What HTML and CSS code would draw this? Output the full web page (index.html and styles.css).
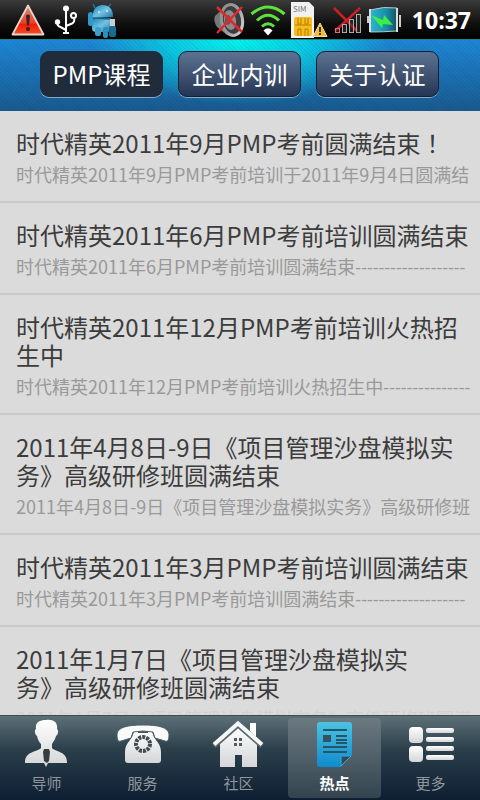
FILE: index.html
```
<!DOCTYPE html>
<html lang="zh-CN">
<head>
    <meta charset="UTF-8">
    <meta name="viewport" content="width=device-width, initial-scale=1.0">
    <title>热点</title>
    <link rel="stylesheet" href="styles.css">
</head>
<body>
    <!-- shared gradients -->
    <svg class="defs" width="0" height="0" aria-hidden="true">
        <defs>
            <linearGradient id="white" x1="0" y1="0" x2="0" y2="1"><stop offset="0" stop-color="#ffffff"/><stop offset="1" stop-color="#d3d5d6"/></linearGradient>
            <linearGradient id="blue" x1="0" y1="0" x2="0" y2="1"><stop offset="0" stop-color="#4cc3e2"/><stop offset="1" stop-color="#0f8bcd"/></linearGradient>
            <linearGradient id="red" x1="0" y1="0" x2="0" y2="1"><stop offset="0" stop-color="#d98a78"/><stop offset="0.6" stop-color="#e8412c"/><stop offset="0.65" stop-color="#f01c00"/><stop offset="1" stop-color="#f4502c"/></linearGradient>
            <linearGradient id="robot" x1="0" y1="0" x2="1" y2="1"><stop offset="0" stop-color="#1583b5"/><stop offset="0.5" stop-color="#74c3e4"/><stop offset="1" stop-color="#176f9d"/></linearGradient>
            <linearGradient id="metal" x1="0" y1="0" x2="1" y2="1"><stop offset="0" stop-color="#8d8d8d"/><stop offset="0.5" stop-color="#9a9a9a"/><stop offset="1" stop-color="#dadada"/></linearGradient>
            <linearGradient id="charge" x1="0" y1="0" x2="1" y2="0"><stop offset="0" stop-color="#2fb6cf"/><stop offset="0.6" stop-color="#198ea9"/><stop offset="1" stop-color="#15505f"/></linearGradient>
        </defs>
    </svg>

    <div class="status-bar">
        <div class="status-group notices">
            <svg width="36" height="36" viewBox="0 0 36 36"><path d="M18 3.500L33.500 32.500H2.500Z" fill="url(#red)" stroke="#e6d5cc" stroke-width="1.800" stroke-linejoin="round"/><path d="M16 13.500q2-2 4 0l-1 10h-2z" fill="#3a2020"/><circle cx="18" cy="27" r="2" fill="#3a2020"/></svg>
            <svg width="24" height="36" viewBox="0 0 24 36"><g fill="none" stroke="#fff" stroke-width="2"><path d="M12 6v25M3.500 20v2q0 2 3 3l5.500 3M20 16q1 4-2 5.500L12 24"/><circle cx="19.500" cy="13.500" r="2.500"/></g><circle cx="12" cy="6.500" r="3" fill="#fff"/><circle cx="3.500" cy="20" r="2.700" fill="#fff"/><path d="M9 30h6v2H9z" fill="#fff"/></svg>
            <svg width="32" height="38" viewBox="0 0 32 38"><path d="M9 7l-2-4M22 6l3-3" stroke="#1b7aa5" stroke-width="1.500"/><path d="M7 17Q6 5 16 4q11 0 11 12z" fill="url(#robot)"/><rect x="6" y="17" width="20" height="14" rx="4" fill="url(#robot)"/><rect x="2" y="11" width="5" height="14" rx="2.500" fill="#2f9aca"/><rect x="9" y="26" width="6" height="9" rx="2" fill="#3d9fca"/><rect x="17" y="26" width="5" height="11" rx="2" fill="#2d8fbd"/><path d="M7 17l18 1" stroke="#14628a" stroke-width="1.500"/><circle cx="13" cy="11" r="1" fill="#d8f3ff"/><circle cx="21" cy="10" r="1" fill="#d8f3ff"/><rect x="24" y="18" width="5" height="8" fill="#c9cdd0"/><rect x="23" y="25" width="7" height="11" rx="2" fill="#176d91"/></svg>
        </div>
        <div class="status-group system">
            <svg width="34" height="36" viewBox="0 0 34 36"><path d="M3 14L15 3v30L5 25Q1 19 3 14z" fill="#777"/><ellipse cx="20" cy="18" rx="10.500" ry="15.500" fill="#3d3d3d" stroke="url(#metal)" stroke-width="3" transform="rotate(-10 20 18)"/><ellipse cx="18" cy="18" rx="6" ry="10" fill="#8b8b8b" transform="rotate(-10 18 18)"/><ellipse cx="16" cy="18" rx="3" ry="5" fill="#5a5a5a"/><path d="M5 5l25 25M30 5L5 31" stroke="#e0292d" stroke-width="2.500"/></svg>
            <svg width="36" height="32" viewBox="0 0 36 32"><g fill="none" stroke="#5fe23a" stroke-width="3"><path d="M1.500 10Q18-4 34.500 10"/><path d="M7 16.500Q18 6 29 16.500"/><path d="M12 22.500Q18 17 24 22.500"/></g><path d="M13.500 26.500Q18 22 22.500 26.500L18 31.500z" fill="#fff"/></svg>
            <svg width="38" height="36" viewBox="0 0 38 36"><path d="M1 0h18l5 5v31H1z" fill="#f1f1f1"/><text x="3" y="10" class="sim">SIM</text><rect x="4" y="15" width="18" height="19" rx="2" fill="#f6bd1d"/><path d="M8 16v6h3v-6M15 16v6h3v-6M5 23h16M8 34v-7h3v7M15 34v-7h3v7" fill="none" stroke="#b77b0d" stroke-width="1"/><path d="M30 21l7 13.500H23z" fill="#f3bd3c" stroke="#f9dc93" stroke-linejoin="round"/><path d="M30 25v5M30 31v2" stroke="#4b3305" stroke-width="2"/></svg>
            <svg width="30" height="32" viewBox="0 0 30 32"><path d="M2 4l23 23M28 4L3 27" stroke="#c71f23" stroke-width="2.500"/><g fill="#333" fill-opacity="0.5" stroke="#aaa" stroke-width="1"><rect x="3.500" y="24.500" width="4" height="4" stroke="#e46a68"/><rect x="10.500" y="20.500" width="4" height="8"/><rect x="17.500" y="15.500" width="4" height="13"/><rect x="24.500" y="10.500" width="4" height="18"/></g></svg>
            <svg width="36" height="32" viewBox="0 0 36 32"><path d="M4 6q14-4 27-2v23q-14 1-27 1z" fill="url(#charge)" stroke="#b6c6ce" stroke-width="1"/><path d="M4 5v23M31 4v24" stroke="#ddd" stroke-width="2"/><path d="M33 11h2v12h-2zM1 12h2v7H1z" fill="#ccc"/><path d="M5 11l12 5 1-5 9 10-10-1-1 4z" fill="#39f047"/></svg>
            <time class="clock">10:37</time>
        </div>
    </div>

    <header class="header">
        <button type="button" class="pill selected">PMP课程</button>
        <button type="button" class="pill">企业内训</button>
        <button type="button" class="pill">关于认证</button>
    </header>

    <main class="news">
        <article class="item">
            <h2>时代精英2011年9月PMP考前圆满结束<span class="mark" lang="zh-TW">！</span></h2>
            <p>时代精英2011年9月PMP考前培训于2011年9月4日圆满结</p>
        </article>
        <article class="item">
            <h2>时代精英2011年6月PMP考前培训圆满结束</h2>
            <p>时代精英2011年6月PMP考前培训圆满结束<span class="dashes">-------------------</span></p>
        </article>
        <article class="item">
            <h2>时代精英2011年12月PMP考前培训火热招生中</h2>
            <p>时代精英2011年12月PMP考前培训火热招生中<span class="dashes">---------------</span></p>
        </article>
        <article class="item">
            <h2>2011年4月8日-9日《项目管理沙盘模拟实务》高级研修班圆满结束</h2>
            <p>2011年4月8日-9日《项目管理沙盘模拟实务》高级研修班</p>
        </article>
        <article class="item">
            <h2>时代精英2011年3月PMP考前培训圆满结束</h2>
            <p>时代精英2011年3月PMP考前培训圆满结束<span class="dashes">-------------------</span></p>
        </article>
        <article class="item">
            <h2>2011年1月7日《项目管理沙盘模拟实<br>务》高级研修班圆满结束</h2>
            <p>2011年1月7日《项目管理沙盘模拟实务》高级研修班圆满</p>
        </article>
    </main>

    <nav class="tabs">
        <a href="#teachers" class="tab">
            <svg width="56" height="50" viewBox="0 0 56 50"><path d="M27 2c8-1 12 3 11 9 2 1 1 6-1 7-1 4-3 6-4 8v4c3 4 15 3 15 14v1H29l-2 4-2-4H6v-1c0-11 13-10 16-14v-4c-2-2-3-4-4-8-2-1-3-6-1-7-1-6 3-9 10-9z" fill="url(#white)"/><path d="M25 31h5l1 3-1 9-2 2-3-2-1-9z" fill="#353d43"/></svg>
            <span>导师</span>
        </a>
        <a href="#service" class="tab">
            <svg width="56" height="50" viewBox="0 0 56 50"><path d="M19 13h4v2h10v-2h4c1 9 9 11 9 21v8q0 3-3 3H13q-3 0-3-3v-8c0-10 8-12 9-21z" fill="url(#white)"/><path d="M2 16C3 9 13 7 28 7s25 2 26 9c0 6-1 8-4 7l-10-3-2-6q-10-2-20 0l-2 6-10 3c-3 1-4-1-4-7z" fill="#fafafa" stroke="#4f6068"/><circle cx="28" cy="26" r="7" fill="none" stroke="#414b52" stroke-width="4" stroke-dasharray="3 1"/></svg>
            <span>服务</span>
        </a>
        <a href="#community" class="tab">
            <svg width="56" height="50" viewBox="0 0 56 50"><path d="M39 5h6v14l-6-6z" fill="#fff"/><path d="M27 8L9 25v24h15V37h7v12h15V25z" fill="url(#white)"/><path d="M3 28L27 7l24 21" fill="none" stroke="#59666d" stroke-width="5"/><path d="M3 26.500L27 5.500l24 21" fill="none" stroke="#f5f6f6" stroke-width="4"/><path d="M23 20h3v3h-3zM28 20h3v3h-3zM23 25h3v3h-3zM28 25h3v3h-3z" fill="#4f5a61"/></svg>
            <span>社区</span>
        </a>
        <a href="#hot" class="tab active">
            <svg width="56" height="50" viewBox="0 0 56 50"><path d="M13 4h29q3 0 3 3v30L34 49H13q-3 0-3-3V7q0-3 3-3z" fill="url(#blue)"/><path d="M16 12h24M29 18h11M29 22h11M29 25h11M16 29h24M16 34h24" stroke="#265566" stroke-width="2"/><path d="M16 17h8v7h-8z" fill="#36515f"/><path d="M34 48V38h10z" fill="#344956" stroke="#35a9dc"/></svg>
            <span>热点</span>
        </a>
        <a href="#more" class="tab">
            <svg width="56" height="50" viewBox="0 0 56 50"><g fill="url(#white)"><rect x="6" y="9" width="14" height="16" rx="4"/><rect x="6" y="28" width="14" height="16" rx="4"/><rect x="23" y="10" width="28" height="5" rx="2"/><rect x="23" y="19" width="28" height="5" rx="2"/><rect x="23" y="28" width="28" height="5" rx="2"/><rect x="23" y="37" width="28" height="5" rx="2"/></g></svg>
            <span>更多</span>
        </a>
    </nav>
</body>
</html>
```
FILE: styles.css
```
* {
    margin: 0;
    padding: 0;
    box-sizing: border-box;
    font-family: "Noto Sans CJK SC", sans-serif;
}

body {
    display: flex;
    flex-direction: column;
    height: 100vh;
    background: #dbdbdb;
}

.defs {
    position: absolute;
}

.status-bar {
    flex: none;
    display: flex;
    justify-content: space-between;
    align-items: center;
    height: 39px;
    padding: 0 9px 0 10px;
    background: linear-gradient(#3a3a3a, #101010 60%, #000);
}

.status-group {
    display: flex;
    align-items: center;
}

.notices {
    gap: 8px;
}

.system {
    gap: 4px;
}

.sim {
    font-size: 8px;
    fill: #777;
}

.clock {
    margin-left: 6px;
    color: #fff;
    font-family: "Open Sans", sans-serif;
    font-size: 23px;
    font-weight: 700;
    line-height: 36px;
}

.header {
    flex: none;
    display: flex;
    justify-content: center;
    gap: 15px;
    padding: 11px 17px 14px 16px;
    background:
        repeating-linear-gradient(45deg, rgba(0,0,0,0.05) 0 1px, transparent 1px 3px),
        radial-gradient(ellipse 150px 64px at 50% 0, #04f3ea, rgba(4,230,235,0.7) 45%, rgba(4,200,235,0) 100%),
        linear-gradient(#1d87d6, #195a8f);
    border-top: 1px solid #17878c;
}

.pill {
    width: 123px;
    height: 46px;
    border: 1px solid #131f33;
    border-radius: 9px;
    background: linear-gradient(#5d7292, #253653);
    box-shadow: 0 1px 0 #86a9c8;
    color: #fff;
    font-size: 24px;
    line-height: 44px;
    white-space: nowrap;
    cursor: pointer;
}

.pill.selected {
    background: #202b3b;
    border-color: #202b3b;
}

.news {
    flex: 1;
    min-height: 0;
    overflow-y: auto;
    scrollbar-width: none;
}

/* fade out the text that runs under the tab bar */
.news::after {
    content: "";
    position: sticky;
    bottom: 0;
    display: block;
    height: 12px;
    background: rgba(219,219,219,0.85);
}

.item {
    padding: 18px 8px 15px 16px;
    border-bottom: 2px solid #c8c8c8;
}

.item h2 {
    color: #3c3c3c;
    font-size: 24px;
    font-weight: 400;
    line-height: 28px;
}

.mark {
    font-family: "Noto Sans CJK TC", sans-serif;
}

.item p {
    margin-top: 5px;
    overflow: hidden;
    color: #999;
    font-size: 18px;
    line-height: 24px;
    white-space: nowrap;
}

.dashes {
    font-family: "Open Sans", sans-serif;
    line-height: 1;
}

.tabs {
    flex: none;
    display: grid;
    grid-template-columns: repeat(5, 1fr);
    height: 85px;
    padding: 2px 0 3px;
    background: linear-gradient(#5d6f76, #2b3f4b 40%, #0d1e32);
    border-top: 1px solid #3c4d52;
}

.tab {
    display: flex;
    flex-direction: column;
    align-items: center;
    margin-right: 3px;
    border-radius: 4px;
    color: #8f979c;
    font-size: 15px;
    line-height: 30px;
    text-decoration: none;
}

.tab.active {
    background: linear-gradient(#6b7a81, #34444f);
    color: #fff;
    font-weight: 700;
}
```
